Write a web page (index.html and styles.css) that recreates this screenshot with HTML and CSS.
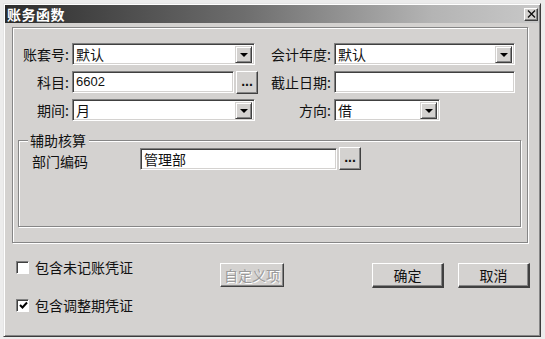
FILE: index.html
```html
<!DOCTYPE html>
<html lang="zh-CN">
<head>
  <meta charset="UTF-8">
  <title>账务函数</title>
  <link rel="stylesheet" href="styles.css">
</head>
<body>
  <div class="window">
    <!-- Title Bar -->
    <div class="titlebar">
      <span class="title">账务函数</span>
      <span class="close">
        <svg width="9" height="8" viewBox="0 0 9 8"><path d="M1 0.5 L8 7.5 M8 0.5 L1 7.5" stroke="#111" stroke-width="1.4"/></svg>
      </span>
    </div>

    <!-- Main Frame -->
    <div class="frame">
      <div class="fields">
        <label class="lbl">账套号:</label>
        <div class="combo"><span class="val">默认</span><span class="arrow"></span></div>
        <label class="lbl">会计年度:</label>
        <div class="combo"><span class="val">默认</span><span class="arrow"></span></div>

        <label class="lbl">科目:</label>
        <div class="picker">
          <div class="edit num">6602</div>
          <button class="dots">...</button>
        </div>
        <label class="lbl">截止日期:</label>
        <div class="edit"></div>

        <label class="lbl">期间:</label>
        <div class="combo"><span class="val">月</span><span class="arrow"></span></div>
        <label class="lbl">方向:</label>
        <div class="combo short"><span class="val">借</span><span class="arrow"></span></div>
      </div>

      <!-- Auxiliary Group -->
      <div class="group">
        <span class="group-title">辅助核算</span>
        <div class="group-row">
          <span class="group-label">部门编码</span>
          <div class="edit dept">管理部</div>
          <button class="dots">...</button>
        </div>
      </div>
    </div>

    <!-- Bottom Controls -->
    <div class="bottom">
      <div class="checks">
        <label class="check"><span class="box"></span>包含未记账凭证</label>
        <label class="check"><span class="box">
          <svg width="9" height="9" viewBox="0 0 9 9"><path d="M1 4 L3.5 6.5 L8 1.5" stroke="#000" stroke-width="2" fill="none"/></svg>
        </span>包含调整期凭证</label>
      </div>
      <button class="btn custom" disabled>自定义项</button>
      <div class="actions">
        <button class="btn main">确定</button>
        <button class="btn main">取消</button>
      </div>
    </div>
  </div>
</body>
</html>
```

FILE: styles.css
```css
/* General Styles */
body {
  margin: 0;
  padding: 0;
  background-color: #ececec;
  font-family: "Noto Sans CJK SC", "Noto Sans", sans-serif;
  font-size: 14px;
  line-height: 16px;
  color: #111;
}

.window {
  box-sizing: border-box;
  width: 538px;
  height: 334px;
  margin: 3px 0 0 3px;
  background: #d4d2d0;
  border: 1px solid;
  border-color: #e4e4e4 #3c3c3c #3c3c3c #e4e4e4;
  box-shadow: inset 1px 1px 0 #fff, inset -1px -1px 0 #868686;
  padding: 1px;
  overflow: hidden;
}

/* Title Bar */
.titlebar {
  height: 18px;
  display: flex;
  align-items: center;
  justify-content: space-between;
  background: linear-gradient(to right, #2c2c2c 0%, #6e6e6e 45%, #b4b4b4 80%, #c8c8c8 100%);
  padding: 0 1px 0 2px;
}

.title {
  color: #fff;
  font-weight: bold;
  font-size: 14px;
  letter-spacing: 0.5px;
}

.close {
  box-sizing: border-box;
  width: 14px;
  height: 13px;
  display: flex;
  align-items: center;
  justify-content: center;
  background: #d4d2d0;
  border: 1px solid;
  border-color: #fff #404040 #404040 #fff;
  box-shadow: inset -1px -1px 0 #868686;
}

/* Etched Frame */
.frame {
  box-sizing: border-box;
  width: 516px;
  height: 216px;
  margin: 4px 0 0 7px;
  padding: 15px 0 0 0;
  border: 1px solid #868686;
  box-shadow: inset 1px 1px 0 #fff, 1px 1px 0 #fff;
}

.fields {
  display: grid;
  grid-template-columns: 56px 186px 72px 181px;
  grid-auto-rows: 22px;
  column-gap: 2px;
  row-gap: 6px;
  margin-left: 1px;
}

.lbl {
  text-align: right;
  align-self: center;
  padding-right: 1px;
  white-space: nowrap;
}

/* Sunken Edits */
.edit,
.combo {
  box-sizing: border-box;
  height: 22px;
  background: #fff;
  border: 1px solid;
  border-color: #808080 #fff #fff #808080;
  box-shadow: inset 1px 1px 0 #404040, inset -1px -1px 0 #d4d2d0;
  padding: 2px 3px;
  line-height: 16px;
}

.combo {
  width: 183px;
  display: flex;
  justify-content: space-between;
  align-items: center;
  padding: 2px 2px 2px 3px;
}

.fields .combo:nth-child(4) {
  width: 181px;
}

.combo.short {
  width: 106px;
}

.arrow {
  box-sizing: border-box;
  width: 17px;
  height: 17px;
  background: #d4d2d0;
  border: 1px solid;
  border-color: #d4d2d0 #404040 #404040 #d4d2d0;
  box-shadow: inset 1px 1px 0 #fff, inset -1px -1px 0 #868686;
  position: relative;
}

.arrow::after {
  content: "";
  position: absolute;
  left: 4px;
  top: 6px;
  border-left: 4px solid transparent;
  border-right: 4px solid transparent;
  border-top: 4px solid #000;
}

.picker {
  display: flex;
  align-items: center;
  gap: 2px;
}

.picker .edit {
  width: 162px;
}

.num {
  font-family: "Liberation Sans", sans-serif;
  font-size: 13px;
}

/* Raised Buttons */
.dots,
.btn {
  box-sizing: border-box;
  background: #d4d2d0;
  border: 1px solid;
  border-color: #fff #404040 #404040 #fff;
  box-shadow: inset -1px -1px 0 #868686;
  font-family: inherit;
  color: #111;
  padding: 0;
  margin: 0;
}

.dots {
  width: 22px;
  height: 23px;
  font-family: "Liberation Sans", sans-serif;
  font-weight: bold;
  font-size: 14px;
  line-height: 14px;
  letter-spacing: 0;
  padding-bottom: 3px;
}

/* Group Box */
.group {
  position: relative;
  box-sizing: border-box;
  height: 87px;
  margin: 19px 6px 0 5px;
  padding: 6px 0 0 13px;
  border: 1px solid #868686;
  box-shadow: inset 1px 1px 0 #fff, 1px 1px 0 #fff;
}

.group-title {
  position: absolute;
  top: -9px;
  left: 9px;
  padding: 0 3px 0 2px;
  background: #d4d2d0;
}

.group-row {
  display: flex;
  align-items: center;
  gap: 2px;
}

.group-label {
  width: 106px;
  padding-top: 4px;
}

.dept {
  width: 197px;
}

/* Bottom Section */
.bottom {
  display: flex;
  align-items: flex-start;
  margin-top: 16px;
  padding: 0 9px 0 11px;
}

.checks {
  width: 204px;
  display: flex;
  flex-direction: column;
  gap: 22px;
}

.check {
  display: flex;
  align-items: center;
  gap: 6px;
  height: 16px;
}

.box {
  box-sizing: border-box;
  width: 13px;
  height: 13px;
  background: #fff;
  border: 1px solid;
  border-color: #808080 #fff #fff #808080;
  box-shadow: inset 1px 1px 0 #404040;
  display: flex;
  align-items: center;
  justify-content: center;
  padding: 1px 0 0 1px;
}

.btn {
  font-size: 14px;
  margin-top: 4px;
}

.custom {
  width: 64px;
  height: 24px;
  color: #9a9a9a;
  text-shadow: 1px 1px 0 #fff;
}

.actions {
  margin-left: auto;
  display: flex;
  gap: 14px;
}

.main {
  width: 72px;
  height: 25px;
  border-width: 1px 2px 2px 1px;
}
```
